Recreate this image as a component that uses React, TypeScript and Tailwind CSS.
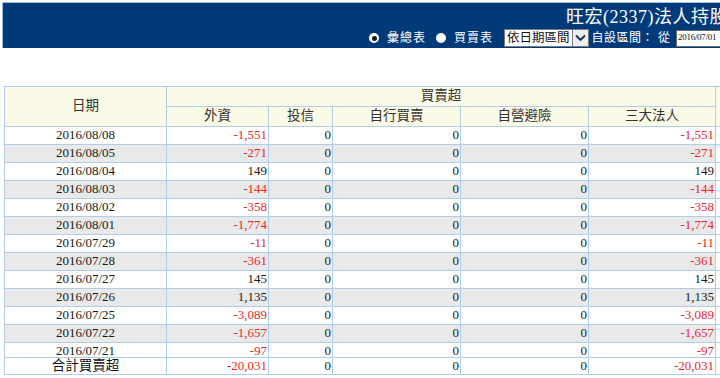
import React from 'react';

type Row = { date: string; foreign: string; total: string; gray: boolean; h: string };

const data: [string, string][] = [
  ['2016/08/08', '-1,551'],
  ['2016/08/05', '-271'],
  ['2016/08/04', '149'],
  ['2016/08/03', '-144'],
  ['2016/08/02', '-358'],
  ['2016/08/01', '-1,774'],
  ['2016/07/29', '-11'],
  ['2016/07/28', '-361'],
  ['2016/07/27', '145'],
  ['2016/07/26', '1,135'],
  ['2016/07/25', '-3,089'],
  ['2016/07/22', '-1,657'],
  ['2016/07/21', '-97'],
];

const rows: Row[] = data.map(([date, v], i) => ({
  date,
  foreign: v,
  total: v,
  gray: i % 2 === 1,
  h: i === data.length - 1 ? 'h-[15px]' : 'h-[18px]',
}));

const serif = "font-['Liberation_Serif','Noto_Sans_CJK_TC',serif]";
const cjk = "font-['Liberation_Sans','Noto_Sans_CJK_TC',sans-serif]";

function Num({ v, w }: { v: string; w: string }) {
  const red = v.startsWith('-');
  return (
    <div
      className={`${w} shrink-0 border-r border-[#afcde8] pr-[1px] text-right ${
        red ? 'text-[#e8262b]' : 'text-[#1a1a1a]'
      }`}
    >
      {v}
    </div>
  );
}

function Radio({ checked }: { checked: boolean }) {
  return (
    <span className="flex h-[10px] w-[10px] items-center justify-center rounded-full bg-white">
      {checked && <span className="h-[5px] w-[5px] rounded-full bg-[#1a1a1a]" />}
    </span>
  );
}

export default function App() {
  return (
    <div className="h-screen w-screen overflow-hidden bg-white">
      {/* 標題列 */}
      <div className="ml-[2px] mt-[2px] w-[900px] border-l border-t border-[#9fc2e2]">
        <div className="h-[45px] bg-[#003a78] text-white">
          <div className={`ml-[563px] whitespace-nowrap pt-[2px] text-[18px] leading-[24px] tracking-[0.5px] ${serif}`}>
            旺宏(2337)法人持股明細
          </div>
          <div className={`ml-[366px] flex items-center whitespace-nowrap text-[12px] ${cjk}`}>
            <Radio checked />
            <span className="ml-[8px] tracking-[1px]">彙總表</span>
            <span className="ml-[10px]">
              <Radio checked={false} />
            </span>
            <span className="ml-[8px] tracking-[1px]">買賣表</span>
            <div className="ml-[11px] flex h-[18px] items-stretch border border-[#7a7a7a] bg-white text-[#111]">
              <span className="px-[2px] text-[12.5px] leading-[16px]">依日期區間</span>
              <span className="flex w-[16px] items-center justify-center border-l border-[#7a7a7a] bg-[#eeeeee]">
                <svg width="11" height="8" viewBox="0 0 11 8">
                  <path d="M1 1.5 L5.5 6 L10 1.5" fill="none" stroke="#1a2a50" strokeWidth="1.8" />
                </svg>
              </span>
            </div>
            <span className="ml-[3px] tracking-[0.5px]">自設區間：</span>
            <span className="ml-[4px]">從</span>
            <div className={`ml-[6px] flex h-[17px] w-[90px] items-center border border-[#6b6b6b] bg-white px-[1px] text-[9px] tracking-[-0.3px] text-[#111] ${serif}`}>
              2016/07/01
            </div>
          </div>
        </div>
      </div>

      {/* 表格 */}
      <div className={`ml-[4px] mt-[38px] w-[840px] border-l border-t border-[#afcde8] text-[13px] ${serif}`}>
        <div className={`flex bg-[#fbfae6] text-[13.5px] text-[#333] ${cjk}`}>
          <div className="flex h-[40px] w-[162px] shrink-0 items-center justify-center border-b border-r border-[#afcde8]">
            日期
          </div>
          <div className="flex w-[549px] shrink-0 flex-col">
            <div className="flex h-[20px] items-center justify-center border-b border-r border-[#afcde8]">買賣超</div>
            <div className="flex h-[20px]">
              <div className="flex w-[102px] items-center justify-center border-b border-r border-[#afcde8]">外資</div>
              <div className="flex w-[64px] items-center justify-center border-b border-r border-[#afcde8]">投信</div>
              <div className="flex w-[128px] items-center justify-center border-b border-r border-[#afcde8]">自行買賣</div>
              <div className="flex w-[128px] items-center justify-center border-b border-r border-[#afcde8]">自營避險</div>
              <div className="flex w-[127px] items-center justify-center border-b border-r border-[#afcde8]">三大法人</div>
            </div>
          </div>
          <div className="flex h-[40px] w-[120px] shrink-0 border-b border-r border-[#afcde8]" />
        </div>

        {rows.map((r) => (
          <div key={r.date} className={`flex ${r.h} border-b border-[#afcde8] leading-[16px]`}>
            <div className={`flex ${r.gray ? 'bg-[#e9e9e9]' : 'bg-white'}`}>
              <div className="w-[162px] shrink-0 border-r border-[#afcde8] text-center text-[#1a1a1a]">{r.date}</div>
              <Num v={r.foreign} w="w-[102px]" />
              <Num v="0" w="w-[64px]" />
              <Num v="0" w="w-[128px]" />
              <Num v="0" w="w-[128px]" />
              <Num v={r.total} w="w-[127px]" />
            </div>
            <div className="w-[120px] shrink-0 border-r border-[#afcde8] bg-white" />
          </div>
        ))}

        <div className="flex h-[17px] border-b border-[#afcde8] leading-[16px]">
          <div className={`w-[162px] shrink-0 border-r border-[#afcde8] text-center text-[13.5px] text-[#111] ${cjk}`}>
            合計買賣超
          </div>
          <Num v="-20,031" w="w-[102px]" />
          <Num v="0" w="w-[64px]" />
          <Num v="0" w="w-[128px]" />
          <Num v="0" w="w-[128px]" />
          <Num v="-20,031" w="w-[127px]" />
          <div className="w-[120px] shrink-0 border-r border-[#afcde8]" />
        </div>
      </div>
      <div className={`ml-[5px] mt-[1px] text-[11px] leading-[12px] text-[#333] ${serif}`}>&lt;&lt;</div>
    </div>
  );
}
